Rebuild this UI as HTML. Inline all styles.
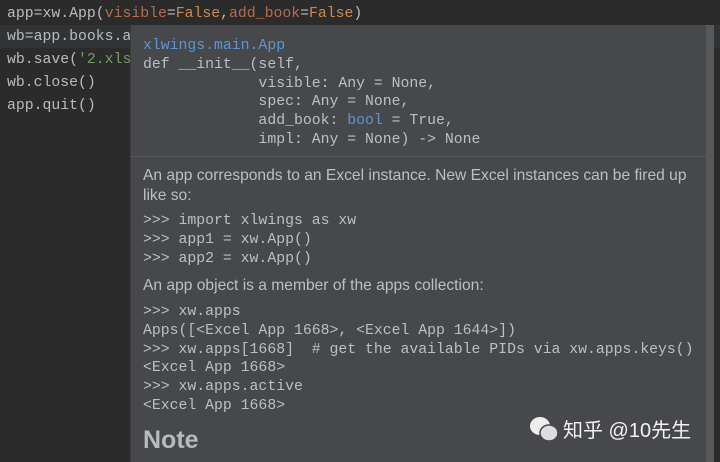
<!DOCTYPE html>
<html><head><style>
body{margin:0;width:720px;height:462px;background:#2b2b2c;overflow:hidden;position:relative;font-family:"Liberation Mono",monospace;}
.code{position:absolute;left:7px;font-size:14.8px;color:#b9bcbf;white-space:pre;line-height:23px;}
.hl{position:absolute;left:0;top:25px;width:720px;height:23px;background:#323334;}
.pop{position:absolute;left:130px;top:25px;width:576px;height:437px;background:#46484b;border-left:1px solid #3a3b3d;}
.sb{position:absolute;left:706px;top:25px;width:8px;height:437px;background:#56585a;}
.m{position:absolute;font-family:"Liberation Mono",monospace;font-size:14.8px;color:#bdbfc2;white-space:pre;line-height:18.8px;}
.s{position:absolute;font-family:"Liberation Sans",sans-serif;font-size:15.6px;color:#bdbfc2;line-height:20px;}
.div{position:absolute;left:130px;top:156px;width:576px;height:1px;background:#56585b;}
</style></head><body>
<div class="hl"></div>
<div class="code" style="top:3px">app=xw.App(<span style="color:#b66b4e">visible</span>=<span style="color:#cc8a4b">False</span>,<span style="color:#b66b4e">add_book</span>=<span style="color:#cc8a4b">False</span>)</div>
<div class="code" style="top:26px">wb=app.books.a</div>
<div class="code" style="top:49px">wb.save(<span style="color:#7a9a5e">'2.xls</span></div>
<div class="code" style="top:72px">wb.close()</div>
<div class="code" style="top:95px">app.quit()</div>
<div class="pop"></div>
<div class="sb"></div>
<div class="div"></div>
<div class="m" style="left:143px;top:37px"><span style="color:#5d95d3">xlwings.main.App</span>
def __init__(self,
             visible: Any = None,
             spec: Any = None,
             add_book: <span style="color:#5d95d3">bool</span> = True,
             impl: Any = None) -&gt; None</div>
<div class="s" style="left:143px;top:166px;white-space:nowrap">An app corresponds to an Excel instance. New Excel instances can be fired up<br>like so:</div>
<div class="m" style="left:143px;top:212px">&gt;&gt;&gt; import xlwings as xw
&gt;&gt;&gt; app1 = xw.App()
&gt;&gt;&gt; app2 = xw.App()</div>
<div class="s" style="left:143px;top:276px">An app object is a member of the apps  collection:</div>
<div class="m" style="left:143px;top:303px">&gt;&gt;&gt; xw.apps
Apps([&lt;Excel App 1668&gt;, &lt;Excel App 1644&gt;])
&gt;&gt;&gt; xw.apps[1668]  # get the available PIDs via xw.apps.keys()
&lt;Excel App 1668&gt;
&gt;&gt;&gt; xw.apps.active
&lt;Excel App 1668&gt;</div>
<div class="s" style="left:143px;top:425px;font-size:25px;font-weight:bold;color:#b8babd;line-height:30px">Note</div>
<svg style="position:absolute;left:527px;top:414px" width="34" height="30"><ellipse cx="13" cy="12" rx="10" ry="9" fill="#eee"/><ellipse cx="22" cy="19" rx="9" ry="8" fill="#ddd" stroke="#46484b" stroke-width="1.5"/></svg>
<div class="s" style="left:563px;top:419px;font-size:20px;color:#f2f2f2;font-family:'Liberation Sans','Noto Sans CJK SC',sans-serif;line-height:24px">知乎 @10先生</div>
</body></html>
